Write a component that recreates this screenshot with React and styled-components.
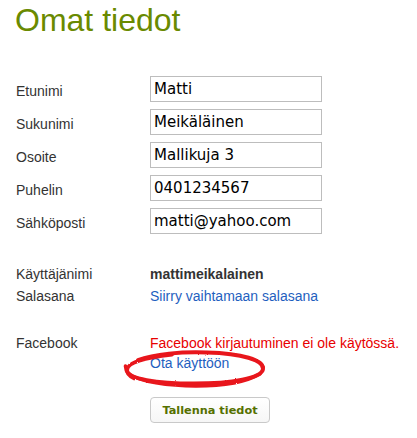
import React from "react";
import styled, { createGlobalStyle } from "styled-components";

const GlobalStyle = createGlobalStyle`
  html, body {
    margin: 0;
    padding: 0;
    background: #ffffff;
  }
  body {
    font-family: "Liberation Sans", Arial, sans-serif;
    color: #333333;
  }
`;

const Page = styled.div`
  padding: 2px 15px 0 15px;
`;

const Title = styled.h1`
  margin: 0;
  font-family: "Liberation Sans", Arial, sans-serif;
  font-size: 32px;
  line-height: 37px;
  font-weight: normal;
  color: #6a8a00;
`;

const Fields = styled.div`
  display: flex;
  flex-direction: column;
  gap: 7px;
  margin-top: 37px;
`;

const FieldRow = styled.div`
  display: flex;
  align-items: flex-start;
`;

const Label = styled.div`
  width: 135px;
  flex: none;
  box-sizing: border-box;
  padding-left: 1px;
  padding-top: ${(p) => p.$top || 0}px;
  font-size: 14px;
  line-height: ${(p) => p.$lh || 16}px;
  color: #333333;
`;

const TextInput = styled.input`
  box-sizing: border-box;
  width: 172px;
  height: 26px;
  margin: 0;
  padding: 0 3px 0 3px;
  border: 1px solid #bdbdbd;
  border-radius: 0;
  font-family: "DejaVu Sans", Verdana, sans-serif;
  font-size: 15px;
  color: #000000;
  background: #ffffff;
  outline: none;
`;

const Info = styled.div`
  display: flex;
  flex-direction: column;
  gap: 6px;
  margin-top: 32px;
`;

const InfoRow = styled.div`
  display: flex;
  align-items: flex-start;
  margin-top: ${(p) => p.$mt || 0}px;
`;

const Value = styled.div`
  display: flex;
  flex-direction: column;
  align-items: flex-start;
  font-size: 14px;
  line-height: ${(p) => p.$lh || 16}px;
`;

const Username = styled.span`
  font-weight: bold;
  color: #333333;
`;

const Link = styled.a`
  color: #1f5fc0;
  text-decoration: none;
  cursor: pointer;
`;

const Warning = styled.span`
  color: #e80000;
`;

const Circled = styled.span`
  position: relative;
  display: inline-block;
`;

const Marker = styled.svg`
  position: absolute;
  left: -28px;
  top: -5.5px;
  width: 150px;
  height: 42px;
  pointer-events: none;
  overflow: visible;
`;

const Actions = styled.div`
  padding-left: 135px;
  margin-top: 24px;
`;

const SaveButton = styled.button`
  box-sizing: border-box;
  width: 120px;
  height: 26px;
  margin: 0;
  padding: 1px 0 0 0;
  border: 1px solid #c9c9c9;
  border-radius: 4px;
  background: linear-gradient(#ffffff, #f6f6f6);
  font-family: "DejaVu Sans", Verdana, sans-serif;
  font-weight: bold;
  font-size: 11.3px;
  color: #557000;
  cursor: pointer;
`;

const fields = [
  ["Etunimi", "Matti"],
  ["Sukunimi", "Meikäläinen"],
  ["Osoite", "Mallikuja 3"],
  ["Puhelin", "0401234567"],
  ["Sähköposti", "matti@yahoo.com"],
];

export default function App() {
  return (
    <>
      <GlobalStyle />
      <Page>
        <Title>Omat tiedot</Title>
        <Fields>
          {fields.map(([label, value]) => (
            <FieldRow key={label}>
              <Label $top={7}>{label}</Label>
              <TextInput type="text" defaultValue={value} />
            </FieldRow>
          ))}
        </Fields>
        <Info>
          <InfoRow>
            <Label>Käyttäjänimi</Label>
            <Value>
              <Username>mattimeikalainen</Username>
            </Value>
          </InfoRow>
          <InfoRow>
            <Label>Salasana</Label>
            <Value>
              <Link>Siirry vaihtamaan salasana</Link>
            </Value>
          </InfoRow>
          <InfoRow $mt={23}>
            <Label $lh={20}>Facebook</Label>
            <Value $lh={20}>
              <Warning>Facebook kirjautuminen ei ole käytössä.</Warning>
              <Circled>
                <Link>Ota käyttöön</Link>
                <Marker viewBox="0 0 150 42">
                  <defs>
                    <filter id="rough" x="-10%" y="-30%" width="120%" height="160%">
                      <feTurbulence type="fractalNoise" baseFrequency="0.9" numOctaves="2" result="n" />
                      <feDisplacementMap in="SourceGraphic" in2="n" scale="1.8" />
                    </filter>
                  </defs>
                  <g filter="url(#rough)" fill="none" stroke="#e8161c" strokeLinecap="round">
                    <path
                      d="M 16 12 C 32 6, 60 3.5, 85 4.5 C 120 5.5, 142 12, 141 21 C 140 30, 110 35.5, 72 35.5 C 35 35.5, 5 31, 5 22 C 5 15, 20 10, 50 6.5"
                      strokeWidth="4"
                    />
                    <path
                      d="M 6 25 C 16 34, 48 38, 74 38 C 104 38, 126 33, 138 26"
                      strokeWidth="3.4"
                    />
                    <path d="M 3.5 18 C 4 24, 7 28, 12 30.5" strokeWidth="3.6" />
                    <path d="M 108 6 C 128 9, 140 14, 141.5 19" strokeWidth="2.6" />
                  </g>
                </Marker>
              </Circled>
            </Value>
          </InfoRow>
        </Info>
        <Actions>
          <SaveButton type="button">Tallenna tiedot</SaveButton>
        </Actions>
      </Page>
    </>
  );
}
